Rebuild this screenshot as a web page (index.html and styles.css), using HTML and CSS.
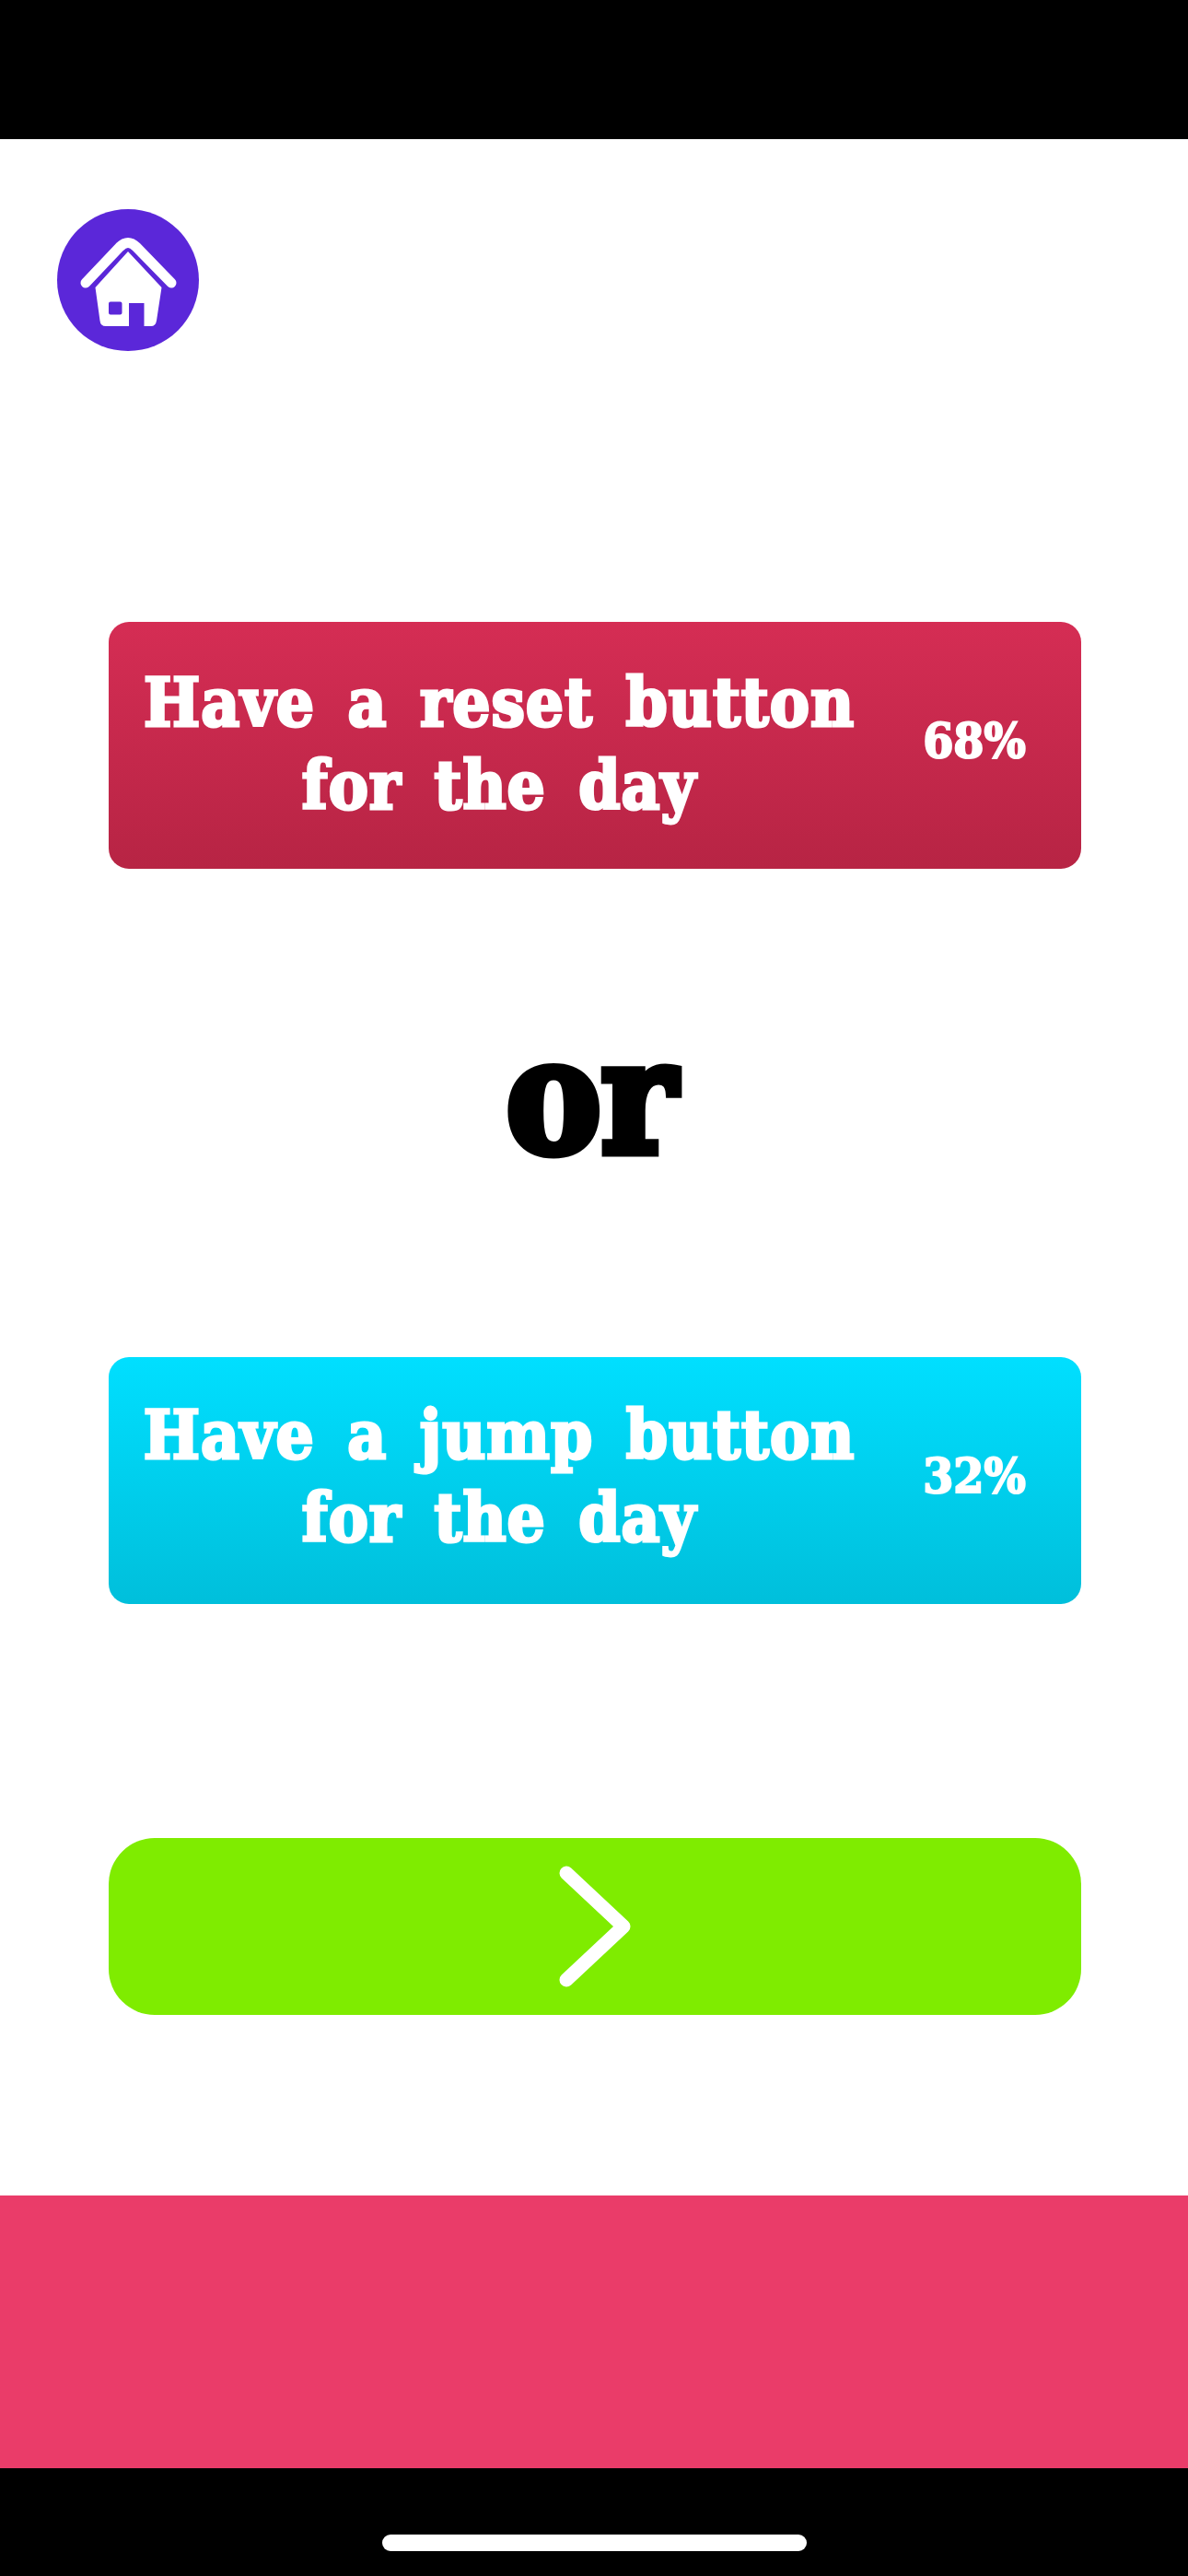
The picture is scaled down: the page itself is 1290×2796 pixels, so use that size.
FILE: index.html
```html
<!DOCTYPE html>
<html lang="en">
<head>
    <meta charset="UTF-8">
    <meta name="viewport" content="width=device-width, initial-scale=1.0">
    <title>Would You Rather</title>
    <link rel="stylesheet" href="styles.css">
</head>
<body>
    <div class="top-bar"></div>
    <div class="main">
        <div class="home-button">
            <svg class="home-icon" viewBox="0 0 154 154">
                <path class="roof" d="M31 80 L68 41 Q77 32 86 41 L124 80"/>
                <path class="house" fill-rule="evenodd" d="M77 46 L41.5 85 L46.5 121 Q47 127 53 127 L78 127 L78 102 L94.5 102 L94.5 127 L102 127 Q107 127 108 121 L113.5 85 Z M58 100.5 L68.5 100.5 Q70.5 100.5 70.5 102.5 L70.5 112.5 Q70.5 114.5 68.5 114.5 L58 114.5 Q56 114.5 56 112.5 L56 102.5 Q56 100.5 58 100.5 Z"/>
            </svg>
        </div>
        <div class="choices">
            <div class="choice red">
                <div class="choice-text">Have a reset button<br>for the day</div>
                <div class="choice-percent">68%</div>
            </div>
            <div class="or">or</div>
            <div class="choice blue">
                <div class="choice-text">Have a jump button<br>for the day</div>
                <div class="choice-percent">32%</div>
            </div>
            <div class="next-button">
                <svg class="next-icon" viewBox="0 0 80 134">
                    <path d="M9 9 L71 67 L9 125"/>
                </svg>
            </div>
        </div>
    </div>
    <div class="ad-bar"></div>
    <div class="bottom-bar">
        <div class="home-indicator"></div>
    </div>
</body>
</html>
```

FILE: styles.css
```css
* {
    box-sizing: border-box;
}
body {
    display: flex;
    flex-direction: column;
    height: 2796px;
    margin: 0;
    background: #fff;
    font-family: "DejaVu Serif Condensed", "DejaVu Serif", serif;
    font-weight: bold;
}
.top-bar {
    height: 151px;
    background: #000;
}
.main {
    flex: 1;
    padding: 76px 116px 0 62px;
}
.home-button {
    display: flex;
    justify-content: center;
    align-items: center;
    width: 154px;
    height: 154px;
    border-radius: 50%;
    background: #5b27d9;
}
.home-icon {
    width: 154px;
    height: 154px;
}
.roof {
    fill: none;
    stroke: #fff;
    stroke-width: 11;
    stroke-linecap: round;
    stroke-linejoin: round;
}
.house {
    fill: #fff;
}
.choices {
    margin-top: 294px;
    margin-left: 56px;
}
.choice {
    display: flex;
    align-items: center;
    height: 268px;
    border-radius: 22px;
    color: #fff;
}
.choice.red {
    background: linear-gradient(#d52d54, #b72444);
}
.choice.blue {
    background: linear-gradient(#00dfff, #00bfdb);
}
.choice-text {
    width: 848px;
    margin-top: -3px;
    font-size: 72px;
    line-height: 90px;
    letter-spacing: 1px;
    word-spacing: 12px;
    text-align: center;
    -webkit-text-stroke: 3px #fff;
}
.blue .choice-text {
    margin-top: -9px;
}
.choice-percent {
    flex: 1;
    margin-top: -12px;
    padding-right: 24px;
    font-size: 53px;
    text-align: center;
    -webkit-text-stroke: 2px #fff;
}
.or {
    height: 530px;
    padding-right: 8px;
    color: #000;
    font-size: 172px;
    line-height: 496px;
    text-align: center;
    -webkit-text-stroke: 9px #000;
}
.next-button {
    display: flex;
    justify-content: center;
    align-items: center;
    height: 192px;
    margin-top: 254px;
    border-radius: 50px;
    background: #7fec00;
}
.next-icon {
    width: 80px;
    height: 134px;
}
.next-icon path {
    fill: none;
    stroke: #fff;
    stroke-width: 15;
    stroke-linecap: round;
    stroke-linejoin: round;
}
.ad-bar {
    height: 296px;
    background: #ea3c69;
}
.bottom-bar {
    display: flex;
    justify-content: center;
    height: 117px;
    padding-top: 72px;
    background: #000;
}
.home-indicator {
    width: 461px;
    height: 18px;
    border-radius: 9px;
    background: #fff;
}
```
